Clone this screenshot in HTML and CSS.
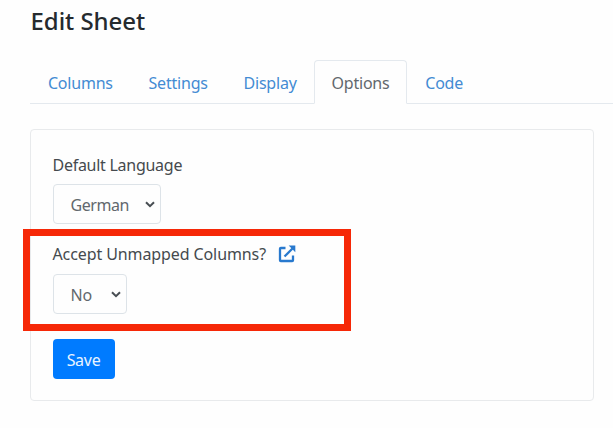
FILE: index.html
```html
<!DOCTYPE html>
<html lang="en">
<head>
<meta charset="utf-8">
<title>Edit Sheet</title>
<link rel="stylesheet" href="styles.css">
</head>
<body>
<main class="page">
  <h1 class="title">Edit Sheet</h1>
  <nav class="tabs">
    <a class="tab">Columns</a>
    <a class="tab">Settings</a>
    <a class="tab">Display</a>
    <a class="tab active">Options</a>
    <a class="tab">Code</a>
  </nav>
  <form class="card">
    <div class="field">
      <label class="label default-language">Default Language</label>
      <div class="select language">
        <span>German</span>
        <svg class="chevron" viewBox="0 0 10 7"><path d="M1 1.2 5 5.2 9 1.2"/></svg>
      </div>
    </div>
    <div class="field unmapped">
      <div class="label-row">
        <label class="label">Accept Unmapped Columns?</label>
        <svg class="external" viewBox="0 0 18 18"><path class="frame" d="M7.5 3H2.8Q2 3 2 3.8V15.2Q2 16 2.8 16H14.2Q15 16 15 15.2V10.5"/><path class="arrow" d="M6.5 11.5 14.5 3.5"/><path class="head" d="M10.7.6H17.3V7.2Z"/></svg>
      </div>
      <div class="select accept">
        <span>No</span>
        <svg class="chevron" viewBox="0 0 10 7"><path d="M1 1.2 5 5.2 9 1.2"/></svg>
      </div>
      <div class="highlight"></div>
    </div>
    <button class="save" type="button">Save</button>
  </form>
</main>
</body>
</html>
```
FILE: styles.css
```css
* { box-sizing: border-box; }
body {
  margin: 0;
  background: #fefefe;
  color: #454a4e;
  font-family: "Noto Sans", "Open Sans", sans-serif;
  font-size: 16px;
  line-height: 24px;
  letter-spacing: -0.1px;
  overflow: hidden;
}
.page { padding: 5px 0 0 30px; height: 428px; }
.title {
  margin: 0;
  height: 55px;
  padding-left: 0.5px;
  color: #252a2e;
  font-size: 24px;
  font-weight: 500;
  line-height: 31px;
  letter-spacing: -0.05px;
  white-space: nowrap;
}
.tabs {
  display: flex;
  height: 44px;
  border-bottom: 1px solid #e4e9ee;
}
.tab {
  height: 44px;
  padding: 10px 16.8px 0 16.9px;
  border: 1px solid transparent;
  color: #438bd3;
  letter-spacing: -0.2px;
  white-space: nowrap;
}
.tab.active {
  padding-left: 16px;
  border-color: #e4e9ee #e4e9ee #fefefe;
  border-radius: 4px 4px 0 0;
  background: #fefefe;
  color: #62686d;
}
.card {
  width: 564px;
  height: 272px;
  margin-top: 25px;
  padding: 23px 22px 23px 21.5px;
  border: 1px solid #e8eaec;
  border-radius: 4px;
}
.label { display: block; white-space: nowrap; }
.default-language { letter-spacing: -0.27px; }
.select {
  display: flex;
  align-items: center;
  justify-content: space-between;
  height: 40px;
  margin-top: 7px;
  padding: 2px 5px 0 17px;
  border: 1px solid #dde3e8;
  border-radius: 4px;
  color: #62686d;
}
.language { width: 108px; letter-spacing: -0.45px; }
.accept { width: 74px; }
.unmapped .select { margin-top: 8px; }
.chevron { width: 10px; height: 7px; margin-top: -2px; fill: none; stroke: #484e53; stroke-width: 2; }
.unmapped { position: relative; margin-top: 18px; }
.label-row { display: flex; align-items: center; gap: 12.5px; }
.external { width: 18px; height: 18px; }
.frame, .arrow { fill: none; stroke: #2879ce; stroke-width: 2.3; }
.head { fill: #2879ce; }
.highlight {
  position: absolute;
  top: -13px;
  left: -29.5px;
  width: 328px;
  height: 102px;
  border: 7px solid #f62807;
}
.save {
  display: block;
  width: 62px;
  height: 40px;
  margin-top: 25px;
  padding: 2px 0 0;
  border: 0;
  border-radius: 4px;
  background: #007bff;
  color: #e9f4ff;
  font: inherit;
  letter-spacing: -0.3px;
}
```
